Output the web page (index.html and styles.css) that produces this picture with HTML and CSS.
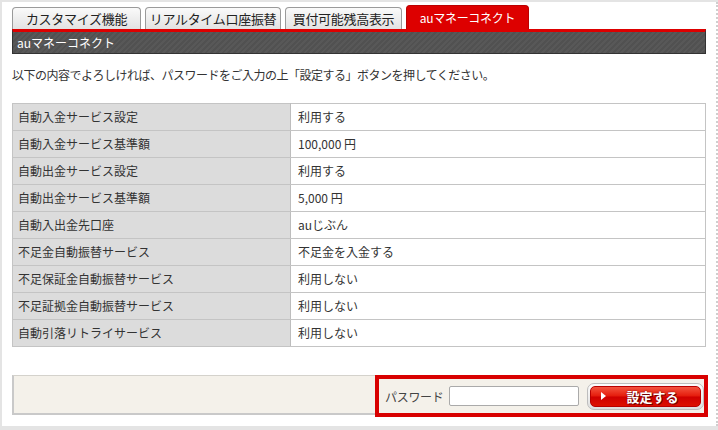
FILE: index.html
```html
<!DOCTYPE html>
<html lang="ja">
<head>
<meta charset="utf-8">
<link rel="stylesheet" href="styles.css">
</head>
<body>
<div class="panel">
  <div class="tabs">
    <div class="tab t1">カスタマイズ機能</div>
    <div class="tab t2">リアルタイム口座振替</div>
    <div class="tab t3">買付可能残高表示</div>
    <div class="tab active">auマネーコネクト</div>
  </div>
  <div class="header">auマネーコネクト</div>
  <p class="intro">以下の内容でよろしければ、パスワードをご入力の上「設定する」ボタンを押してください。</p>
  <table class="info">
    <tr><th>自動入金サービス設定</th><td>利用する</td></tr>
    <tr><th>自動入金サービス基準額</th><td>100,000 円</td></tr>
    <tr><th>自動出金サービス設定</th><td>利用する</td></tr>
    <tr><th>自動出金サービス基準額</th><td>5,000 円</td></tr>
    <tr><th>自動入出金先口座</th><td>auじぶん</td></tr>
    <tr><th>不足金自動振替サービス</th><td>不足金を入金する</td></tr>
    <tr><th>不足保証金自動振替サービス</th><td>利用しない</td></tr>
    <tr><th>不足証拠金自動振替サービス</th><td>利用しない</td></tr>
    <tr><th>自動引落リトライサービス</th><td>利用しない</td></tr>
  </table>
  <div class="submit-bar">
    <div class="submit-box">
      <label class="pw-label">パスワード</label>
      <input class="pw-input" type="password">
      <button class="btn"><span class="btn-inner"><span class="tri"></span><span class="btn-text">設定する</span></span></button>
    </div>
  </div>
</div>
</body>
</html>
```
FILE: styles.css
```css
html, body {
  margin: 0;
  padding: 0;
  background: #e4e4e4;
  font-family: "Noto Sans CJK JP", "Noto Sans", sans-serif;
  font-size: 12px;
  color: #333;
}
.panel {
  width: 702px;
  height: 423px;
  margin: 2px 0 0 2px;
  padding: 1px 2px 0 10px;
  background: #fff;
  border-right: 2px dotted #cfcfcf;
}
.tabs {
  display: flex;
  align-items: flex-end;
  gap: 4px;
  height: 26px;
}
.tab {
  box-sizing: border-box;
  height: 22px;
  border: 1px solid #9a9a9a;
  border-bottom: none;
  border-radius: 4px 4px 0 0;
  background: linear-gradient(#fafafa, #e2e2e2);
  color: #222;
  font-size: 13px;
  line-height: 21px;
  text-align: center;
  letter-spacing: -0.3px;
}
.t1 { width: 129px; }
.t2 { width: 136px; }
.t3 { width: 117px; }
.tab.active {
  width: 123px;
  height: 24px;
  border: 1px solid #b00;
  border-bottom: none;
  background: #dd0000;
  color: #fff;
  line-height: 24px;
  font-size: 12px;
}
.header {
  box-sizing: border-box;
  width: 694px;
  height: 25px;
  border-top: 3px solid #dd0000;
  border-left: 1px solid #333;
  border-right: 1px solid #333;
  border-bottom: 1px solid #333;
  background: repeating-linear-gradient(135deg, #585858 0 2px, #515151 2px 4px);
  color: #fff;
  padding-left: 4px;
  line-height: 21px;
}
.intro {
  margin: 13px 0 0 0;
  line-height: 16px;
  letter-spacing: -0.5px;
  height: 16px;
}
.info {
  margin-top: 20px;
  width: 694px;
  border-collapse: collapse;
}
.info th, .info td {
  border: 1px solid #c4c4c4;
  height: 26px;
  padding: 0;
  font-weight: normal;
  text-align: left;
  line-height: 14px;
}
.info th {
  width: 272px;
  background: #dcdcdc;
  padding-left: 5px;
  border-right: 1px solid #bdbdbd;
}
.info td {
  padding-left: 7px;
}
.submit-bar {
  box-sizing: border-box;
  margin-top: 28px;
  width: 694px;
  height: 40px;
  background: #f4f1ea;
  border: 1px solid #d4d2cc;
  border-left: 2px solid #c9c9c9;
  border-bottom: 2px solid #c9c9c9;
  display: flex;
  justify-content: flex-end;
  align-items: flex-start;
}
.submit-box {
  box-sizing: border-box;
  width: 333px;
  height: 42px;
  margin: -1px -3px 0 0;
  border: 4px solid #d80000;
  display: flex;
  align-items: center;
  padding-left: 6px;
}
.pw-label {
  color: #444;
  margin-right: 5px;
  letter-spacing: -0.3px;
}
.pw-input {
  box-sizing: border-box;
  width: 130px;
  height: 20px;
  border: 1px solid #aaa;
  border-radius: 2px;
  background: #fff;
  margin: 0 8px 0 0;
  padding: 0;
}
.btn {
  box-sizing: border-box;
  width: 117px;
  height: 27px;
  padding: 2px;
  margin: 0;
  border: 1px solid #bdbdbd;
  border-radius: 7px;
  background: linear-gradient(#fdfdfd, #dedede);
  display: flex;
}
.btn-inner {
  flex: 1;
  display: flex;
  align-items: center;
  border-radius: 5px;
  background: linear-gradient(#f4543f 0%, #e51b0b 48%, #cf0000 52%, #dd1000 100%);
  border: 1px solid #b80000;
}
.tri {
  width: 0;
  height: 0;
  border-left: 5px solid #fff;
  border-top: 4px solid transparent;
  border-bottom: 4px solid transparent;
  margin-left: 10px;
}
.btn-text {
  margin-left: 21px;
  color: #fff;
  font-weight: bold;
  font-size: 13px;
  text-shadow: 0 0 2px #700, 1px 1px 0 #700;
  font-family: "Noto Sans CJK JP", sans-serif;
}
```
